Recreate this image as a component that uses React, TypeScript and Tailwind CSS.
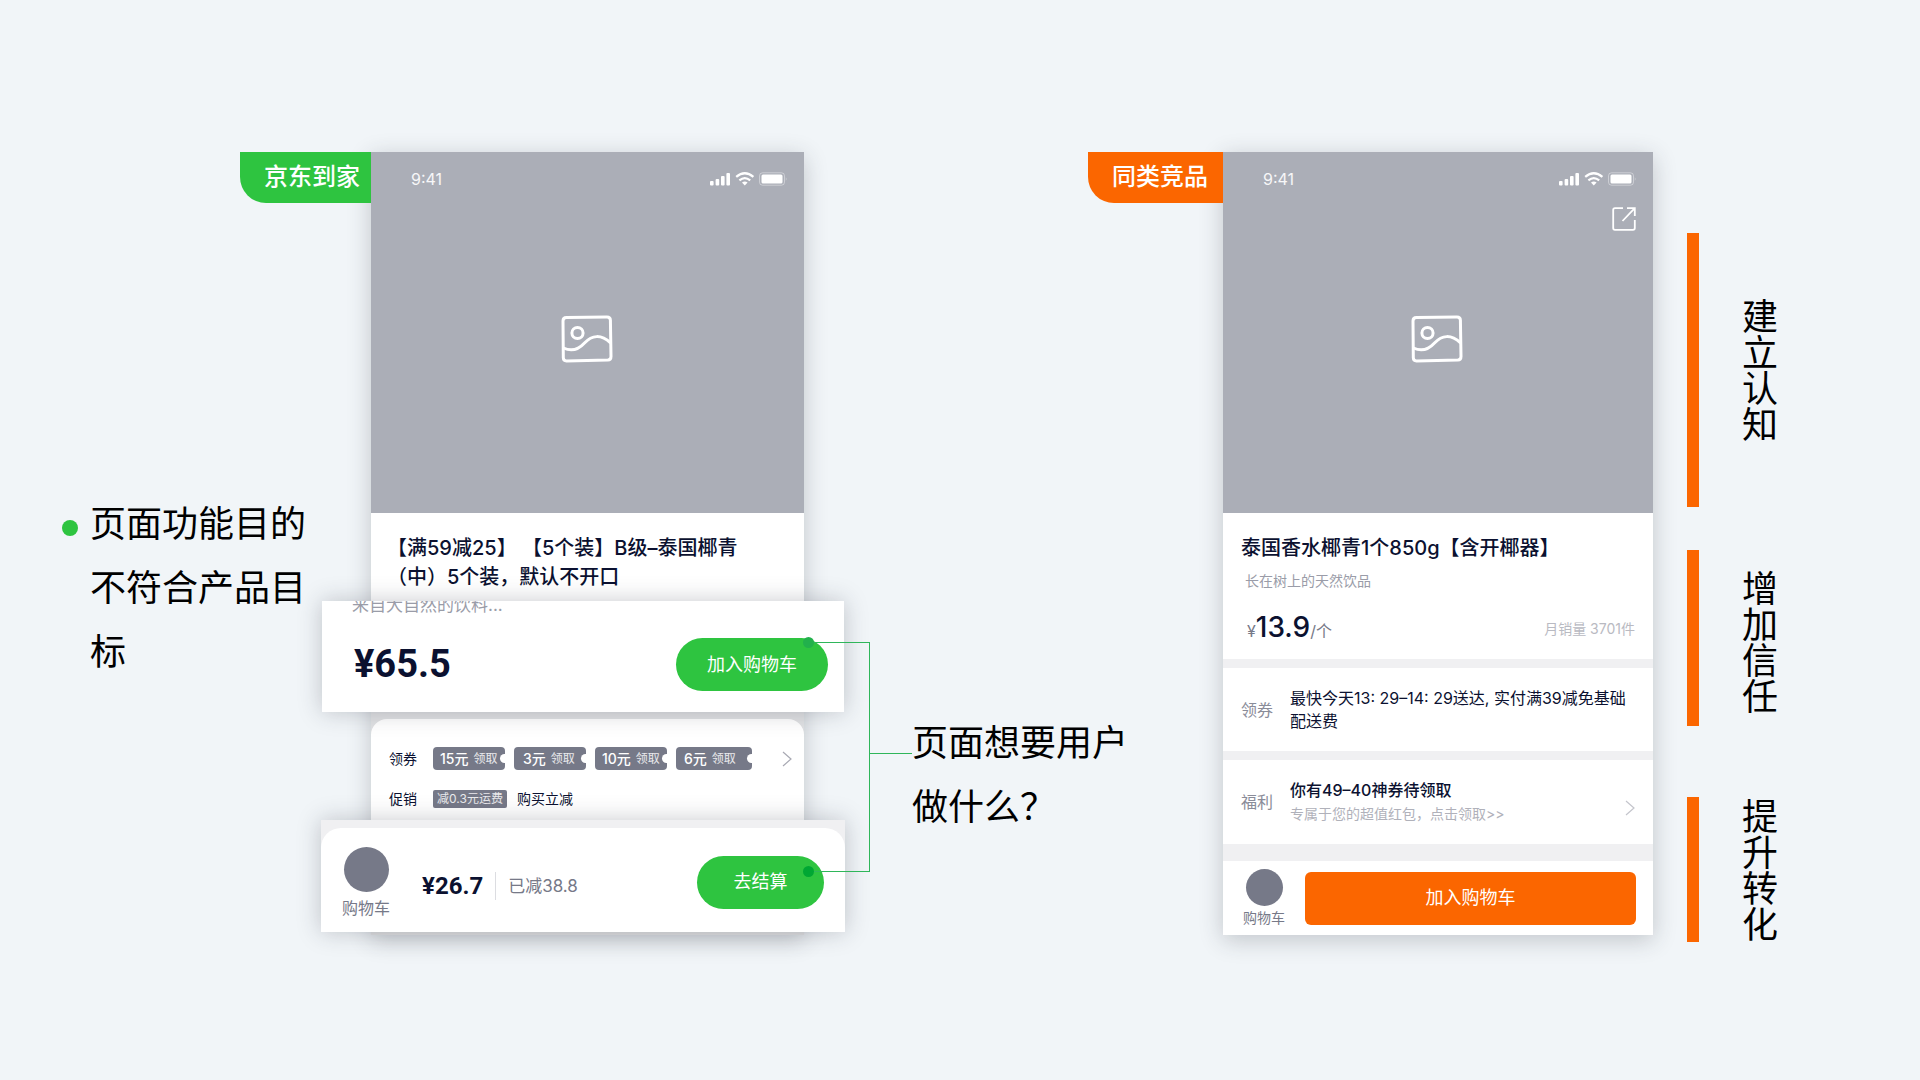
import React from "react";

const coupons = [
  { amount: "15元", box: "w-[72px] pl-[7px]" },
  { amount: "3元", box: "w-[72px] pl-[9px]" },
  { amount: "10元", box: "w-[72px] pl-[7px]" },
  { amount: "6元", box: "w-[76px] pl-2" },
];

const stages = [
  { name: "建立认知", box: "h-[274px] mb-[43px]", text: "" },
  { name: "增加信任", box: "h-[176px] mb-[71px]", text: "pt-2" },
  { name: "提升转化", box: "h-[145px]", text: "" },
];

const ImageIcon = () => (
  <svg width="52" height="48" viewBox="0 0 52 48" fill="none" stroke="#fff" strokeWidth="3">
    <path d="M5.5 2.6 L46 2 Q49.3 2 49.4 5.2 L50 41.4 Q50 44.8 46.8 45 L5.5 46 Q2.4 46 2.3 42.8 L2 6 Q2 2.7 5.5 2.6 Z" />
    <circle cx="16.5" cy="18" r="5.6" />
    <path d="M2.5 33 C11 37 18 34 23.5 28 C31 20 40 19 49.5 28" />
  </svg>
);

const ChevronIcon = () => (
  <svg width="10" height="16" viewBox="0 0 10 16" fill="none" stroke="currentColor" strokeWidth="1.2">
    <path d="M1 1 L9 8 L1 15" />
  </svg>
);

const ShareIcon = () => (
  <svg width="24" height="24" viewBox="0 0 24 24" fill="none" stroke="#fff" strokeWidth="1.8">
    <path d="M11 1.2 H3 Q1.2 1.2 1.2 3 V21 Q1.2 22.8 3 22.8 H21 Q22.8 22.8 22.8 21 V13" />
    <path d="M15 1.2 H22.8 V9 M22.3 1.7 L10.5 14" />
  </svg>
);

const StatusBar = () => (
  <div className="flex items-center justify-between pl-10 pr-4 pt-[15px] font-['Inter'] text-base text-white/90">
    <span>9:41</span>
    <svg width="78" height="14" viewBox="0 0 78 14" fill="#fff">
      <rect x="0" y="9" width="3.6" height="4.5" rx="1" />
      <rect x="5.6" y="7" width="3.6" height="6.5" rx="1" />
      <rect x="11" y="4" width="3.6" height="9.5" rx="1" />
      <rect x="16.4" y="1" width="3.6" height="12.5" rx="1" />
      <g fill="none" stroke="#fff" strokeWidth="2.2">
        <path d="M26.2 4.9 Q34.8 -2.4 43.4 4.9" />
        <path d="M29.4 8.3 Q34.8 3.8 40.2 8.3" />
      </g>
      <path d="M32 10.6 Q34.8 8.6 37.6 10.6 L34.8 13.5 Z" />
      <rect x="49.5" y="0.8" width="25" height="12.4" rx="3" fill="none" stroke="#fff" strokeOpacity="0.4" />
      <rect x="51.5" y="2.6" width="21" height="8.8" rx="1.5" />
      <path d="M75.8 5 Q77.6 7 75.8 9 Z" fillOpacity="0.4" />
    </svg>
  </div>
);

const Home = () => {
  return (
    <div className="relative bg-white shadow-[0_5px_22px_rgba(40,45,60,0.24)]">
      <div className="absolute right-full top-0 flex h-[51px] w-[131px] items-center rounded-bl-[26px] bg-[#2ec440] pb-0.5 pl-6 text-2xl font-medium whitespace-nowrap text-white">
        京东到家
      </div>

      <div className="h-[361px] bg-[#abaeb7]">
        <StatusBar />
        <div className="mt-[124px] flex justify-center pr-0.5">
          <ImageIcon />
        </div>
      </div>

      <h2 className="h-[88px] pl-4 pt-[21px] text-xl leading-[29px] font-medium whitespace-nowrap">
        【满59减25】 【5个装】B级–泰国椰青
        <br />
        （中）5个装，默认不开口
      </h2>

      <div className="relative -ml-[49px] -mr-10 h-[111px] bg-white pl-[30px] pr-4 shadow-[0_0_22px_rgba(40,45,60,0.25)]">
        <div className="h-[13px] overflow-hidden">
          <p className="-mt-2 text-[17px] leading-6 text-[#9a9ca8]">来自大自然的饮料...</p>
        </div>
        <div className="flex items-center justify-between pt-6">
          <span className="pl-0.5 font-['Roboto'] text-[38px] leading-[53px] font-bold">¥65.5</span>
          <button className="h-[53px] w-[152px] rounded-full bg-[#2ec440] text-lg text-white">加入购物车</button>
        </div>
      </div>

      <div className="bg-[#e0e1e3] pt-[7px]">
        <div className="h-[101px] rounded-t-2xl bg-white pl-[18px] pr-3 pt-7 text-sm">
          <div className="flex items-center">
            <span className="w-11">领券</span>
            <div className="flex gap-[9px]">
              {coupons.map((c) => (
                <button
                  key={c.amount}
                  className={`relative flex h-[23px] items-center gap-[5px] overflow-hidden rounded bg-[#767988] whitespace-nowrap text-white ${c.box}`}
                >
                  <span className="text-sm font-medium">{c.amount}</span>
                  <span className="text-xs text-white/85">领取</span>
                  <i className="absolute -right-1 top-[7px] h-[9px] w-[9px] rounded-full bg-white" />
                </button>
              ))}
            </div>
            <span className="ml-auto text-[#a8a9b3]">
              <ChevronIcon />
            </span>
          </div>
          <div className="mt-5 flex h-[18px] items-center">
            <span className="w-11">促销</span>
            <span className="flex h-[18px] w-[74px] items-center justify-center rounded-xs bg-[#767988] text-xs whitespace-nowrap text-white/85">
              减0.3元运费
            </span>
            <span className="ml-[10px]">购买立减</span>
          </div>
        </div>
      </div>

      <div className="relative -ml-[50px] -mr-[41px] bg-[#f0f0f2] pt-2 shadow-[0_0_22px_rgba(40,45,60,0.25)]">
        <div className="flex h-26 items-center rounded-t-[20px] bg-white pl-[21px] pr-[21px] pt-1">
          <div className="flex flex-col items-center text-base leading-5 text-[#767988]">
            <i className="mb-[6px] h-[45px] w-[45px] rounded-full bg-[#767988]" />
            购物车
          </div>
          <span className="ml-8 mt-2 border-r border-[#dcdde1] pr-3 font-['Roboto'] text-2xl leading-7 font-bold">
            ¥26.7
          </span>
          <span className="ml-3 mt-2 text-[17px] leading-7 text-[#767988]">已减38.8</span>
          <button className="ml-auto h-[53px] w-[127px] rounded-full bg-[#2ec440] text-lg text-white">去结算</button>
        </div>
      </div>
      <div className="h-[3px] bg-[#dcddde]" />

      {/* connector between the two green buttons */}
      <div className="absolute -right-[66px] top-[490px] h-[230px] w-[61px] border-y border-r border-[#2fb65a]">
        <i className="absolute -left-[6px] -top-[6px] h-[11px] w-[11px] rounded-full bg-[#22b14c]" />
        <i className="absolute -left-[6px] -bottom-[6px] h-[11px] w-[11px] rounded-full bg-[#00a733]" />
        <i className="absolute left-full top-[110px] h-px w-[43px] bg-[#2fb65a]" />
      </div>
    </div>
  );
};

const Rival = () => {
  return (
    <div className="relative bg-white shadow-[0_5px_22px_rgba(40,45,60,0.24)]">
      <div className="absolute right-full top-0 flex h-[51px] w-[135px] items-center rounded-bl-[26px] bg-[#fb6600] pb-0.5 pl-6 text-2xl font-medium whitespace-nowrap text-white">
        同类竞品
      </div>

      <div className="relative h-[361px] bg-[#abaeb7]">
        <StatusBar />
        <div className="mt-[124px] flex justify-center pr-0.5">
          <ImageIcon />
        </div>
        <button className="absolute right-[17px] top-[55px]" aria-label="分享">
          <ShareIcon />
        </button>
      </div>

      <div className="h-[146px] pl-[18px] pr-[18px] pt-[21px]">
        <h2 className="text-xl leading-[29px] font-medium whitespace-nowrap">泰国香水椰青1个850g【含开椰器】</h2>
        <p className="mt-2 pl-1 text-sm text-[#9a9ca8]">长在树上的天然饮品</p>
        <div className="mt-[18px] flex items-center justify-between pl-[6px]">
          <span className="flex items-baseline text-base leading-9 text-[#767988]">
            ¥<b className="text-[28px] font-medium text-[#0b1130]">13.9</b>/个
          </span>
          <span className="text-sm text-[#b9bac2]">月销量 3701件</span>
        </div>
      </div>

      <div className="flex h-[92px] items-center border-t-[9px] border-[#f0f0f2] pl-[18px] pr-[18px]">
        <span className="w-[49px] shrink-0 text-base text-[#8a8c99]">领券</span>
        <p className="text-base leading-[23px]">最快今天13: 29–14: 29送达, 实付满39减免基础配送费</p>
      </div>

      <div className="flex h-[93px] items-center border-t-[9px] border-[#f0f0f2] pl-[18px] pr-[18px]">
        <span className="w-[49px] shrink-0 text-base text-[#8a8c99]">福利</span>
        <div>
          <p className="text-base leading-6 font-medium">你有49–40神券待领取</p>
          <p className="text-sm leading-6 text-[#b0b1ba]">专属于您的超值红包，点击领取&gt;&gt;</p>
        </div>
        <span className="ml-auto pt-3 text-[#c4c5cc]">
          <ChevronIcon />
        </span>
      </div>

      <div className="flex h-[91px] items-center gap-5 border-t-[17px] border-[#f0f0f2] pl-5 pr-[17px]">
        <div className="flex shrink-0 flex-col items-center text-sm leading-5 text-[#767988]">
          <i className="mb-0.5 h-[37px] w-[37px] rounded-full bg-[#767988]" />
          购物车
        </div>
        <button className="h-[53px] flex-1 rounded-md bg-[#fb6600] text-lg text-white">加入购物车</button>
      </div>
    </div>
  );
};

const App = () => {
  return (
    <main className="grid min-h-screen w-full grid-cols-[371fr_433fr_419fr_430fr_267fr] items-start overflow-hidden bg-[#f1f5f8] pt-[152px] pb-10 font-['Inter','Noto_Sans_CJK_SC',sans-serif] text-[#0b1130]">
      <div className="flex gap-3 pl-[62px] pt-[340px]">
        <i className="mt-7 h-4 w-4 shrink-0 rounded-full bg-[#2ec440]" />
        <p className="w-[218px] text-4xl leading-16 text-black">页面功能目的不符合产品目标</p>
      </div>

      <Home />

      <p className="w-[326px] pl-27 pt-[559px] text-4xl leading-16 text-black">页面想要用户做什么？</p>

      <Rival />

      <div className="pl-[34px] pt-[81px]">
        {stages.map((s) => (
          <div key={s.name} className={`flex items-center border-l-12 border-[#fb6600] pl-10 ${s.box}`}>
            <p className={`text-4xl leading-9 text-black [writing-mode:vertical-rl] ${s.text}`}>{s.name}</p>
          </div>
        ))}
      </div>
    </main>
  );
};

export default App;
